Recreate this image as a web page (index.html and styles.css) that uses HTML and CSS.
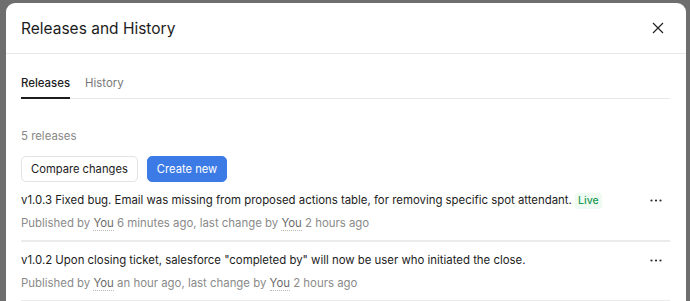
FILE: index.html
```html
<!doctype html>
<html>
<head>
    <meta charset="utf-8">
    <title>Releases and History</title>
    <link rel="stylesheet" href="styles.css">
</head>
<body>
<div class="modal">
    <div class="modal_head">
        <h2 class="modal_title">Releases and History</h2>
        <a href="javascript:;" class="close">
            <svg width="12" height="12" viewBox="0 0 12 12"><path d="M1 1L11 11M11 1L1 11" stroke="#222" stroke-width="1.2" fill="none"/></svg>
        </a>
    </div>
    <div class="modal_body">
        <div class="tabs">
            <a href="javascript:;" class="on">Releases</a>
            <a href="javascript:;">History</a>
        </div>
        <p class="count">5 releases</p>
        <div class="actions">
            <a href="javascript:;" class="btn">Compare changes</a>
            <a href="javascript:;" class="btn btn_primary">Create new</a>
        </div>
        <ul class="releases">
            <li>
                <div class="info">
                    <p class="name">v1.0.3 Fixed bug. Email was missing from proposed actions table, for removing specific spot attendant. <span class="live">Live</span></p>
                    <p class="meta">Published by <span class="user">You</span> 6 minutes ago, last change by <span class="user">You</span> 2 hours ago</p>
                </div>
                <a href="javascript:;" class="more">
                    <svg width="12" height="3" viewBox="0 0 12 3"><circle cx="1.5" cy="1.5" r="1.1"/><circle cx="6" cy="1.5" r="1.1"/><circle cx="10.5" cy="1.5" r="1.1"/></svg>
                </a>
            </li>
            <li>
                <div class="info">
                    <p class="name">v1.0.2 Upon closing ticket, salesforce "completed by" will now be user who initiated the close.</p>
                    <p class="meta">Published by <span class="user">You</span> an hour ago, last change by <span class="user">You</span> 2 hours ago</p>
                </div>
                <a href="javascript:;" class="more">
                    <svg width="12" height="3" viewBox="0 0 12 3"><circle cx="1.5" cy="1.5" r="1.1"/><circle cx="6" cy="1.5" r="1.1"/><circle cx="10.5" cy="1.5" r="1.1"/></svg>
                </a>
            </li>
        </ul>
    </div>
</div>
</body>
</html>
```

FILE: styles.css
```css
body,
ul,
p,
h2 {
    margin: 0;
    padding: 0;
}

li {
    list-style: none;
}

a {
    text-decoration: none;
    color: inherit;
}

body {
    background: #6e6e6e;
    font-family: Inter, "Noto Sans", sans-serif;
    color: #1c1c1c;
    height: 301px;
    overflow: hidden;
}

.modal {
    margin: 3px 4px 0 6px;
    background: #fff;
    border-radius: 9px 9px 0 0;
    height: 320px;
}

.modal_head {
    height: 50px;
    padding: 0 22px 0 15px;
    display: flex;
    align-items: center;
    justify-content: space-between;
    border-bottom: 1px solid #e8e8e8;
}

.modal_title {
    font-size: 15.5px;
    font-weight: 400;
}

.close {
    display: flex;
}

.modal_body {
    padding: 0 16px 0 15px;
}

.tabs {
    display: flex;
    gap: 15px;
    padding-top: 20px;
    border-bottom: 1px solid #e8e8e8;
}

.tabs a {
    font-size: 11.4px;
    line-height: 18px;
    padding-bottom: 5px;
    color: #777;
    border-bottom: 2px solid transparent;
    margin-bottom: -1px;
}

.tabs .on {
    color: #1c1c1c;
    font-weight: 500;
    border-bottom-color: #1c1c1c;
}

.count {
    font-size: 11.4px;
    line-height: 18px;
    color: #888;
    margin-top: 28px;
}

.actions {
    display: flex;
    gap: 9px;
    margin-top: 11px;
}

.btn {
    display: block;
    font-size: 11.2px;
    line-height: 24px;
    padding: 0 9px;
    border: 1px solid #e3e3e3;
    border-radius: 5px;
    color: #1c1c1c;
}

.btn_primary {
    background: #3c7ae6;
    border-color: #3c7ae6;
    color: #fff;
}

.releases li {
    display: flex;
    align-items: flex-start;
    justify-content: space-between;
    padding: 9px 0 8px;
    border-bottom: 2px solid #ebebeb;
}

.name {
    font-size: 11.4px;
    line-height: 18px;
}

.meta {
    font-size: 11.4px;
    line-height: 18px;
    color: #8a8a8a;
    margin-top: 5px;
}

.user {
    color: #6a6a6a;
    border-bottom: 1px dotted #b8b8b8;
}

.live {
    display: inline-block;
    font-size: 10.5px;
    font-weight: 500;
    line-height: 16px;
    padding: 0 3px;
    color: #1d9a55;
    background: #eefaf2;
    border-radius: 3px;
}

.more {
    display: flex;
    margin: 8px 8px 0 0;
    fill: #2a2a2a;
}
```
